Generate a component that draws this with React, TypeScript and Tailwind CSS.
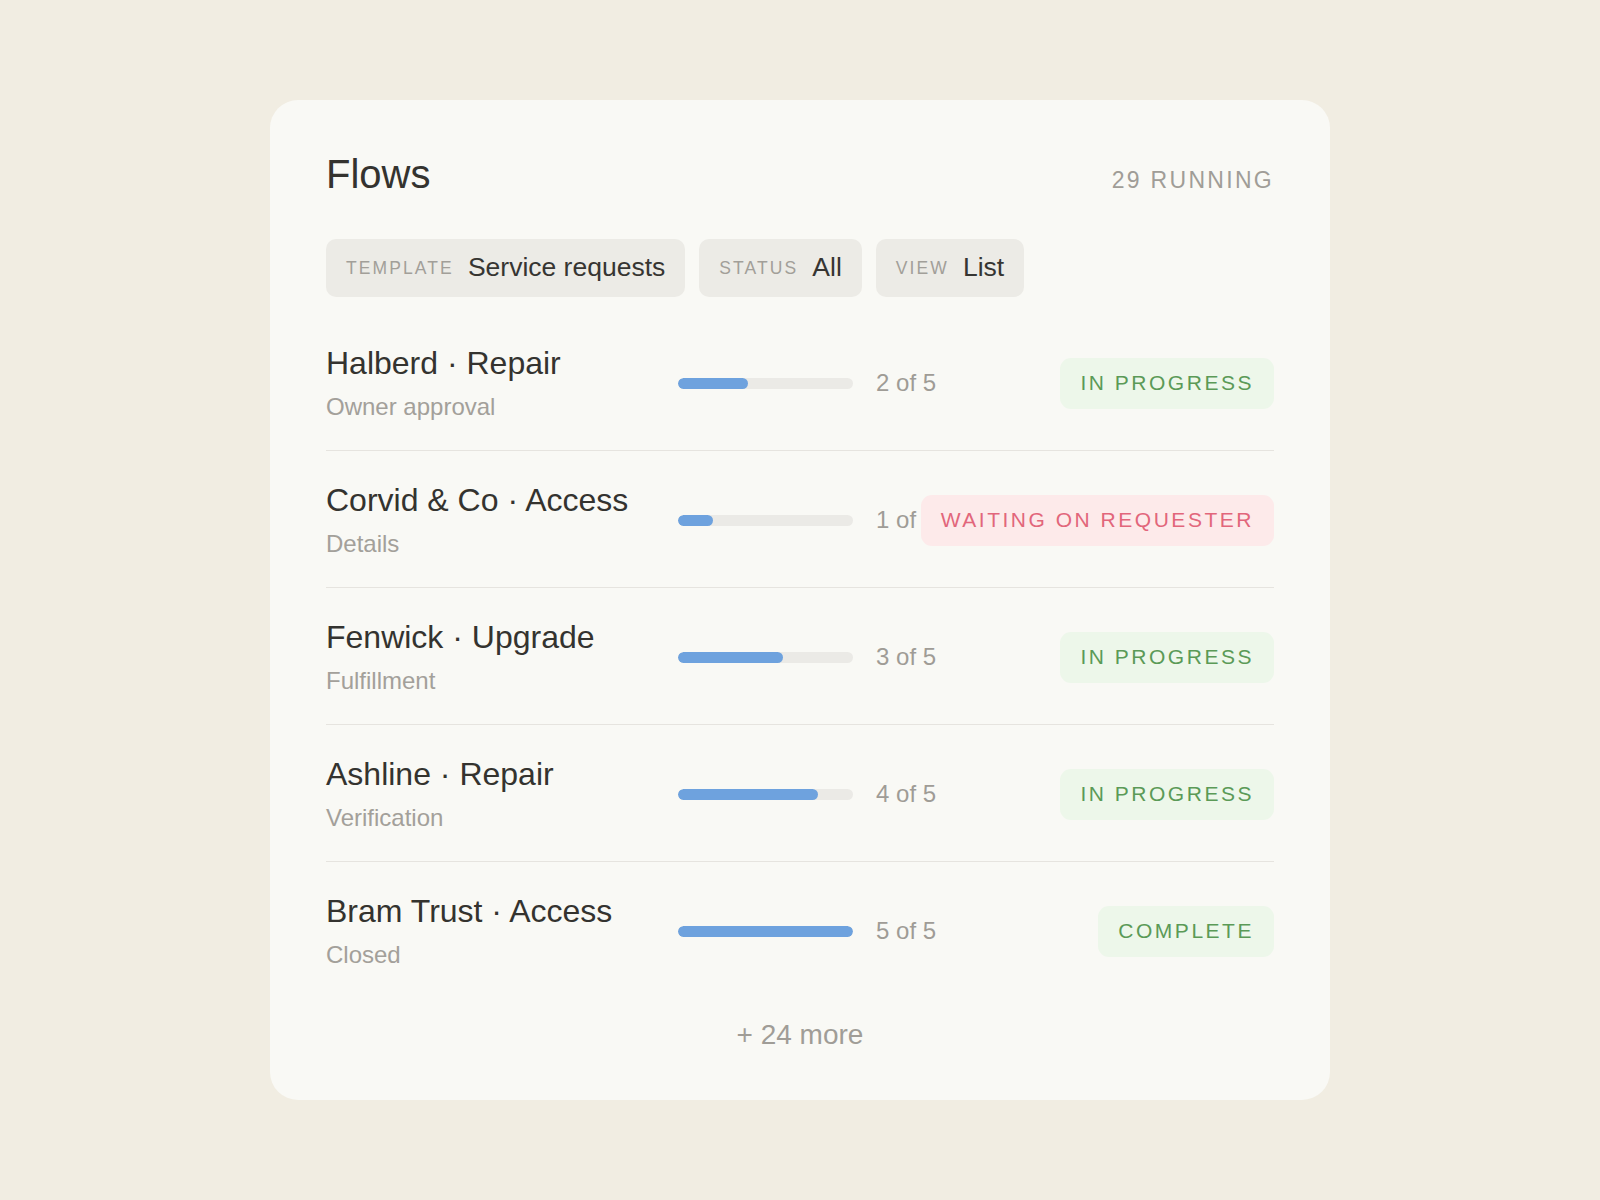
import React from "react";

type Tone = "green" | "red";

interface FlowRow {
    id: number;
    title: string;
    stage: string;
    step: number;
    status: string;
    tone: Tone;
}

const rows: FlowRow[] = [
    {id: 1, title: "Halberd · Repair", stage: "Owner approval", step: 2, status: "IN PROGRESS", tone: "green"},
    {id: 2, title: "Corvid & Co · Access", stage: "Details", step: 1, status: "WAITING ON REQUESTER", tone: "red"},
    {id: 3, title: "Fenwick · Upgrade", stage: "Fulfillment", step: 3, status: "IN PROGRESS", tone: "green"},
    {id: 4, title: "Ashline · Repair", stage: "Verification", step: 4, status: "IN PROGRESS", tone: "green"},
    {id: 5, title: "Bram Trust · Access", stage: "Closed", step: 5, status: "COMPLETE", tone: "green"},
];

const TOTAL_STEPS = 5;

function FilterPill({label, value}: { label: string; value: string }) {
    return (
        <div className="h-[58px] flex items-center gap-3.5 px-5 rounded-[10px] bg-[#ecebe6]">
            <span className="text-[17.5px] tracking-[0.12em] text-[#a29f99]">{label}</span>
            <span className="text-[26.5px] text-[#363532]">{value}</span>
        </div>
    );
}

function StatusBadge({label, tone}: { label: string; tone: Tone }) {
    const toneClass = tone === "green"
        ? "bg-[#edf7ea] text-[#5b9a57]"
        : "bg-[#fdeaea] text-[#e2667b]";
    return (
        <div className={`relative shrink-0 h-[51px] flex items-center px-5 rounded-[11px] text-[21px] tracking-[0.12em] whitespace-nowrap ${toneClass}`}>
            {label}
        </div>
    );
}

function FlowItem({row, last}: { row: FlowRow; last: boolean }) {
    return (
        <li className={`flex items-center pt-[29px] pb-[27px] ${last ? "" : "border-b border-[#e6e4df]"}`}>
            <div className="w-[352px] shrink-0 flex flex-col">
                <span className="text-[32px] leading-[40px] text-[#34332f] whitespace-nowrap">{row.title}</span>
                <span className="mt-2 text-[24px] leading-[32px] text-[#a3a09a]">{row.stage}</span>
            </div>
            <div className="flex-1 min-w-0 flex items-center gap-[23px]">
                <div className="w-[175px] h-[11px] shrink-0 rounded-full bg-[#ebeae6] overflow-hidden">
                    <div className="h-full rounded-full bg-[#6ea2de]"
                         style={{width: `${(row.step / TOTAL_STEPS) * 100}%`}}/>
                </div>
                <span className="text-[24px] text-[#9f9c96] whitespace-nowrap">{row.step} of {TOTAL_STEPS}</span>
            </div>
            <StatusBadge label={row.status} tone={row.tone}/>
        </li>
    );
}

export default function App() {
    return (
        <div className="min-h-screen flex items-center justify-center bg-[#f1ede2] font-['Liberation_Sans',Arial,sans-serif]">
            <div className="w-[1060px] rounded-[28px] bg-[#f9f9f5] px-14 pt-[50px] pb-[48px]">
                <div className="flex items-baseline justify-between">
                    <h1 className="text-[40px] leading-[48px] text-[#34332f]">Flows</h1>
                    <span className="text-[23px] tracking-[0.1em] text-[#a09d97]">29 RUNNING</span>
                </div>

                <div className="mt-[41px] flex gap-3.5">
                    <FilterPill label="TEMPLATE" value="Service requests"/>
                    <FilterPill label="STATUS" value="All"/>
                    <FilterPill label="VIEW" value="List"/>
                </div>

                <ul className="mt-[17px] flex flex-col">
                    {rows.map((row, i) => (
                        <FlowItem key={row.id} row={row} last={i === rows.length - 1}/>
                    ))}
                </ul>

                <div className="mt-5 text-center text-[28px] leading-[34px] text-[#a09d97]">+ 24 more</div>
            </div>
        </div>
    );
}
